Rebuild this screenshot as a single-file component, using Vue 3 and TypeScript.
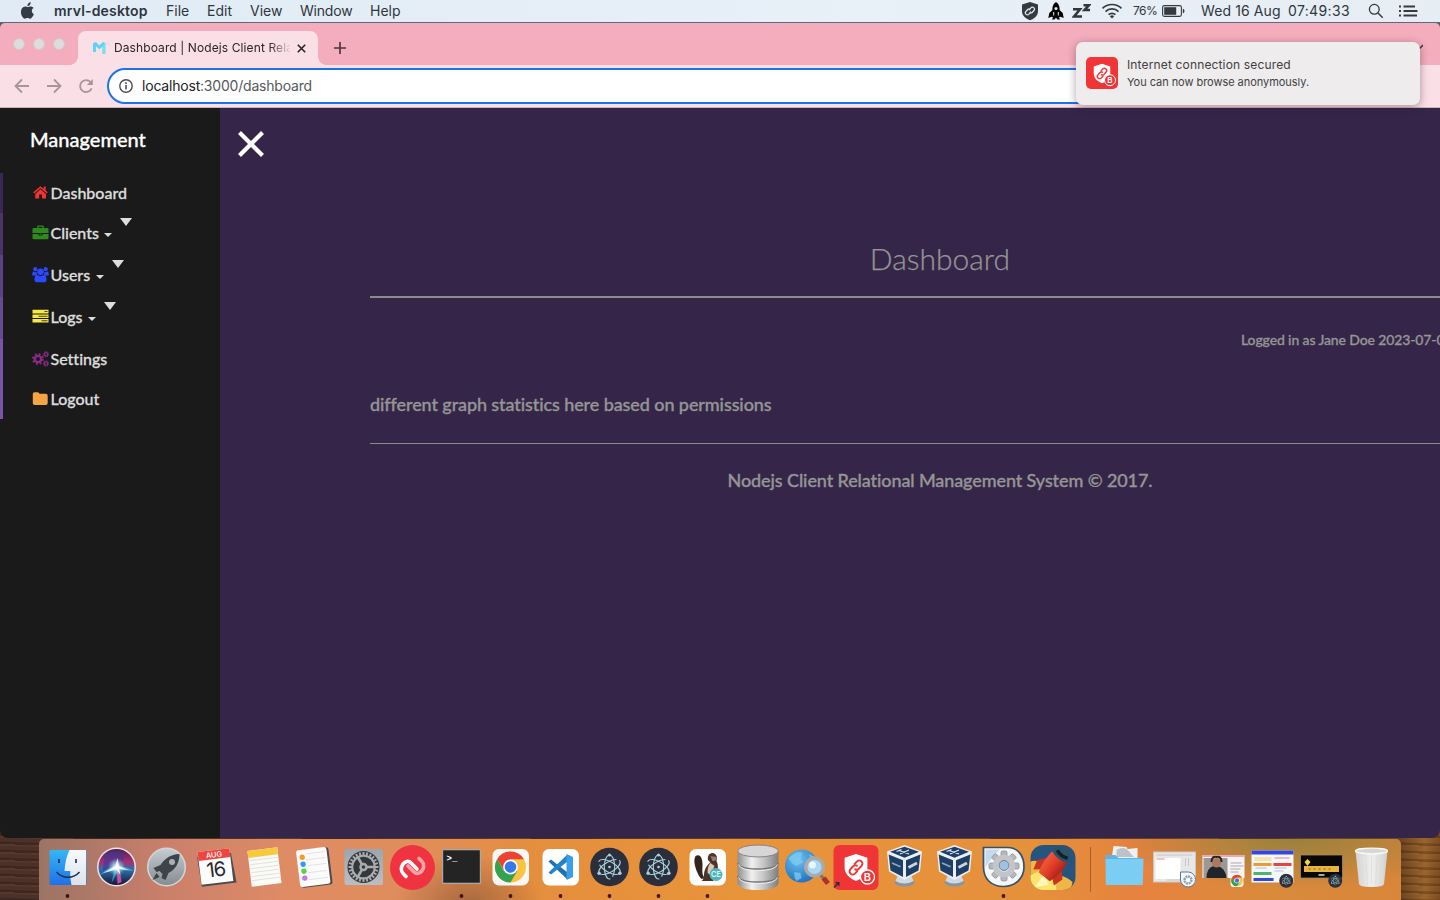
<script setup lang="ts">
interface NavItem {
  label: string
  icon: string
  color: string
  menu: boolean
}

const menus: { label: string; cls: string }[] = [
  { label: 'File', cls: 'm-file' },
  { label: 'Edit', cls: 'm-edit' },
  { label: 'View', cls: 'm-view' },
  { label: 'Window', cls: 'm-window' },
  { label: 'Help', cls: 'm-help' },
]

const nav: NavItem[] = [
  { label: 'Dashboard', icon: 'home', color: '#f03434', menu: false },
  { label: 'Clients', icon: 'briefcase', color: '#2f8a1c', menu: true },
  { label: 'Users', icon: 'users', color: '#2b49ff', menu: true },
  { label: 'Logs', icon: 'server', color: '#f8e749', menu: true },
  { label: 'Settings', icon: 'cogs', color: '#8c2a86', menu: false },
  { label: 'Logout', icon: 'folder', color: '#f5a442', menu: false },
]

const apps: string[] = [
  'finder', 'siri', 'launchpad', 'calendar', 'notes', 'reminders', 'prefs', 'authy',
  'terminal', 'chrome', 'vscode', 'electron', 'electron', 'dbeaver', 'database', 'globe',
  'secure', 'vbox', 'vbox', 'automator', 'rocket',
]
const running = new Set<number>([0, 8, 9, 10, 11, 12, 13, 19])
const stacks: string[] = ['downloads', 'win-a', 'win-b', 'win-c', 'win-d', 'trash']
const teeth: number[] = [0, 45, 90, 135, 180, 225, 270, 315]
const ticks: number[] = Array.from({ length: 24 }, (_, i) => i * 15)
</script>

<template>
  <div class="desktop">
    <svg class="defs" width="0" height="0">
      <defs>
        <linearGradient id="gBlue" x1="0" y1="0" x2="0" y2="1"><stop offset="0" stop-color="#34b8f5" /><stop offset="1" stop-color="#1f6fe8" /></linearGradient>
        <linearGradient id="gWhite" x1="0" y1="0" x2="0" y2="1"><stop offset="0" stop-color="#f7f9fc" /><stop offset="1" stop-color="#d9e3ee" /></linearGradient>
        <linearGradient id="gSilver" x1="0" y1="0" x2="0" y2="1"><stop offset="0" stop-color="#c3ccd0" /><stop offset="1" stop-color="#868c92" /></linearGradient>
        <linearGradient id="gSteel" x1="0" y1="0" x2="0" y2="1"><stop offset="0" stop-color="#9ba6b0" /><stop offset="1" stop-color="#b9bec4" /></linearGradient>
        <linearGradient id="gDisk" x1="0" y1="0" x2="1" y2="0"><stop offset="0" stop-color="#8d8d8d" /><stop offset=".35" stop-color="#f1f1f1" /><stop offset=".65" stop-color="#c3c3c3" /><stop offset="1" stop-color="#7d7d7d" /></linearGradient>
        <linearGradient id="gSiri" x1="0" y1="0" x2="0" y2="1"><stop offset="0" stop-color="#4a2457" /><stop offset=".35" stop-color="#a92c72" /><stop offset=".58" stop-color="#2f6fa8" /><stop offset="1" stop-color="#191238" /></linearGradient>
        <radialGradient id="gGlow"><stop offset="0" stop-color="#fff" /><stop offset=".35" stop-color="#c9f3fb" stop-opacity=".75" /><stop offset="1" stop-color="#5ad4ee" stop-opacity="0" /></radialGradient>
        <linearGradient id="gTrash" x1="0" y1="0" x2="1" y2="0"><stop offset="0" stop-color="#d2d2d2" /><stop offset=".5" stop-color="#f0f0ef" /><stop offset="1" stop-color="#cfcfce" /></linearGradient>
        <linearGradient id="gHull" x1="0" y1="0" x2="1" y2="0"><stop offset="0" stop-color="#ee5a38" /><stop offset=".5" stop-color="#e23c28" /><stop offset="1" stop-color="#ad2418" /></linearGradient>
        <radialGradient id="gGlobe" cx=".4" cy=".3" r=".8"><stop offset="0" stop-color="#6fc0f0" /><stop offset="1" stop-color="#1769b8" /></radialGradient>
        <clipPath id="cRocket"><rect x="-22" y="-22" width="45" height="45" rx="13" /></clipPath>
      </defs>
      <symbol id="shieldlink" viewBox="0 0 24 28">
        <path fill="#fff" d="M12 1 23 4.500V14c0 6.500-5 10.500-11 13C6 24.500 1 20.500 1 14V4.500z" />
        <g fill="none" stroke="#ef3535" stroke-width="1.900" stroke-linecap="round">
          <path d="m10.800 10.500 2.200-2.400a3 3 0 0 1 4.300 4.300l-2.600 2.800a3 3 0 0 1-3.500.5" />
          <path d="m13.200 17.500-2.200 2.400a3 3 0 0 1-4.300-4.300l2.600-2.800a3 3 0 0 1 3.500-.5" />
        </g>
      </symbol>
      <symbol id="chromeball" viewBox="-16 -16 32 32">
        <circle r="15.500" fill="#fbc344" />
        <path fill="#ea4335" d="M-13.400-7.800A15.500 15.500 0 0 1 13.400-7.800H0L-6.500 3.500z" />
        <path fill="#33a352" d="M-13.400-7.800A15.500 15.500 0 0 0 0 15.500L6.800 3.900-6.700 4z" />
        <circle r="7.400" fill="#fff" /><circle r="5.800" fill="#3478ea" />
      </symbol>
      <symbol id="atom" viewBox="-20 -20 40 40">
        <circle r="19.300" fill="#2b2e3b" />
        <g fill="none" stroke="#a9d4de" stroke-width="1.100" stroke-linecap="round">
          <ellipse rx="12" ry="5.200" transform="rotate(30)" pathLength="100" stroke-dasharray="42 7 51 0" />
          <ellipse rx="12" ry="5.200" transform="rotate(270)" pathLength="100" stroke-dasharray="42 7 51 0" />
          <ellipse rx="12" ry="5.200" transform="rotate(150)" pathLength="100" stroke-dasharray="42 7 51 0" />
        </g>
        <g fill="#a9d4de"><circle r="1.300" /><circle cy="-12" r="1.500" /><circle cx="-10.400" cy="6.200" r="1.700" /><circle cx="10.400" cy="6.200" r="1.700" /></g>
      </symbol>
    </svg>

    <header class="menubar">
      <svg class="apple" viewBox="0 0 14 17" width="14" height="17">
        <path fill="#333c46" d="M9.700.3c.1 1-.3 1.900-.9 2.600-.6.700-1.500 1.200-2.400 1.100-.1-.9.300-1.900.9-2.500C7.900.8 8.900.3 9.700.3zM12.900 12.200c-.4.900-.6 1.300-1.100 2.100-.7 1.100-1.600 2.400-2.700 2.400-1 0-1.300-.6-2.600-.6-1.400 0-1.700.6-2.600.6-1.200 0-2-1.200-2.700-2.200C-.8 11.500-.4 6.900 2.100 5.200c.7-.5 1.500-.8 2.300-.8 1.100 0 1.700.6 2.600.6.900 0 1.400-.6 2.700-.6 1 0 2.100.5 2.900 1.500-2.600 1.400-2.200 5.100.3 6.300z" />
      </svg>
      <b class="appname">mrvl-desktop</b>
      <span v-for="m in menus" :key="m.label" class="menu" :class="m.cls">{{ m.label }}</span>
      <div class="tray">
        <svg class="t-shield" width="18" height="20" viewBox="0 0 18 20">
          <path fill="#343a40" d="M9 1l8 2.500V10c0 4.600-3.400 7.400-8 9.300C4.400 17.400 1 14.600 1 10V3.500z" />
          <g fill="none" stroke="#dfe8ef" stroke-width="1.200" stroke-linecap="round"><path d="m8.200 8.800 1.700-2a2 2 0 0 1 3 2.700l-1.800 2c-.6.600-1.400.7-2 .3" /><path d="m9.600 11-1.700 2.200a2 2 0 0 1-3-2.700l1.800-2c.6-.6 1.400-.7 2-.3" /></g>
        </svg>
        <svg class="t-rocket" width="16" height="18" viewBox="0 0 16 18">
          <path fill="#000" d="M8 0c2.500 1.600 3.600 4 3.600 6.500V8l3.100 2.900 1 5.100-3.400-1.300-1.300.9 1 2H9.500L8 15.800 6.500 17.600H4l1-2-1.300-.9L.3 16l1-5.100L4.400 8V6.500C4.400 4 5.500 1.600 8 0z" />
          <circle cx="8" cy="6.500" r="1.500" fill="#e4edf4" /><path d="M5.700 10v3.500M10.300 10v3.500" stroke="#e4edf4" />
        </svg>
        <svg class="t-zz" width="19" height="16" viewBox="0 0 19 16"><path fill="none" stroke="#32373c" stroke-width="2.500" d="M1 6.300h7L2 13.600h8M11.500 2.200H17L12.500 7H18" /></svg>
        <svg class="t-wifi" width="22" height="16" viewBox="0 0 22 16">
          <g fill="none" stroke="#343a40" stroke-width="1.700"><path d="M1.500 5.400a13.500 13.500 0 0 1 19 0" /><path d="M4.500 8.600a9.300 9.300 0 0 1 13 0" /><path d="M7.600 11.700a4.800 4.800 0 0 1 6.800 0" /></g><path fill="#343a40" d="m11 15.600-2.100-2.200a3 3 0 0 1 4.200 0z" />
        </svg>
        <span class="percent">76%</span>
        <svg class="t-batt" width="23" height="12" viewBox="0 0 23 12"><rect x=".6" y=".6" width="18.800" height="10.800" rx="1.800" fill="none" stroke="#343a40" stroke-width="1.100" /><rect x="2.200" y="2.200" width="12" height="7.600" fill="#343a40" /><path fill="#343a40" d="M20.800 3.800c2.200 0 2.200 4.400 0 4.400z" /></svg>
        <span class="date">Wed 16 Aug</span>
        <span class="time">07:49:33</span>
        <svg class="t-search" width="16" height="16" viewBox="0 0 16 16"><circle cx="6.300" cy="6.300" r="4.900" fill="none" stroke="#343a40" stroke-width="1.300" /><path d="m10 10 4.700 4.700" stroke="#343a40" stroke-width="1.500" /></svg>
        <svg class="t-list" width="19" height="12" viewBox="0 0 19 12"><path fill="none" stroke="#343a40" stroke-width="1.800" d="M0 1.500h2M0 6h2M0 10.500h2M4.500 1.500H16M4.500 6h14M4.500 10.500H18" /></svg>
      </div>
    </header>

    <section class="window">
      <div class="tabstrip">
        <i class="light" /><i class="light" /><i class="light" />
        <div class="tab">
          <svg class="fav" width="13" height="12" viewBox="0 0 13 12"><path fill="#5bd3f7" d="M0 1.200 3 0l3.300 3.500L10 0l2.300.8V12H9.600V4.500L6.400 7.300 2.900 4.200V10H0z" /><path fill="#71e6e6" d="M9.600 4.500 12.300 1v11H9.600z" /></svg>
          <span class="tabtitle">Dashboard | Nodejs Client Rela</span>
          <svg class="tabx" width="9" height="9" viewBox="0 0 9 9"><path d="m.8.8 7.400 7.400M8.200.8.800 8.200" stroke="#2b2427" stroke-width="1.600" /></svg>
        </div>
        <svg class="plus" width="12" height="12" viewBox="0 0 12 12"><path d="M6 0v12M0 6h12" stroke="#4c363d" stroke-width="1.700" /></svg>
        <svg class="chev" width="8" height="6" viewBox="0 0 8 6"><path d="m0 1 4 4 4-4" fill="none" stroke="#4c363d" stroke-width="1.600" /></svg>
      </div>
      <div class="toolbar">
        <svg class="nav-ic" width="16" height="16" viewBox="0 0 16 16"><path d="M15 8H1.800M8 1.500 1.500 8 8 14.500" fill="none" stroke="#a8959b" stroke-width="1.800" /></svg>
        <svg class="nav-ic" width="16" height="16" viewBox="0 0 16 16"><path d="M1 8h13.200M8 1.500 14.500 8 8 14.500" fill="none" stroke="#a8959b" stroke-width="1.800" /></svg>
        <svg class="nav-ic" width="16" height="16" viewBox="0 0 16 16"><path d="M13.700 10.200A6 6 0 1 1 12.500 4" fill="none" stroke="#a8959b" stroke-width="1.800" /><path fill="#a8959b" d="M14.800 1v6H8.800z" /></svg>
        <div class="omnibox">
          <svg width="14" height="14" viewBox="0 0 14 14"><circle cx="7" cy="7" r="6.200" fill="none" stroke="#494c50" stroke-width="1.400" /><path d="M7 6v4.500M7 3.200v1.700" stroke="#494c50" stroke-width="1.600" /></svg>
          <span class="url"><em>localhost</em>:3000/dashboard</span>
        </div>
      </div>

      <div class="page">
        <aside class="sidebar">
          <h2>Management</h2>
          <ul>
            <li v-for="(n, i) in nav" :key="n.label" :class="['s' + i, { tall: n.menu }]">
              <svg class="ic" width="17" height="16" viewBox="0 0 17 16" :fill="n.color">
                <template v-if="n.icon === 'home'"><path d="M8.500 4.300 14 8.900V13.600H10V9.500H7.200V13.600H3.200V8.900z" /><path d="M8.500 1.200 11.800 4V1.600H13.700V5.500L15.700 7.300 14.800 8.500 8.500 3.300 2.200 8.500 1.300 7.300z" /></template>
                <template v-else-if="n.icon === 'briefcase'"><path d="M5.200 3V1.500Q5.200.5 6.200.5h4.600q1 0 1 1V3h3.400q1.300 0 1.300 1.300V8H.5V4.300Q.5 3 1.800 3zm1.300 0h4V1.700h-4zM.5 8.900h6V10.500h4V8.900h6v4q0 1.300-1.300 1.300H1.800Q.5 14.200.5 12.900zM7.500 8.700h2v1h-2z" /></template>
                <template v-else-if="n.icon === 'users'"><circle cx="8.500" cy="4.700" r="3.300" /><circle cx="3.300" cy="2.200" r="2.100" /><circle cx="13.700" cy="2.200" r="2.100" /><path d="M.3 8.500c-.2-2.500.4-4.400 1.700-4 1 .8 2 .8 2.800.5-.3 1.400 0 2.500.8 3.400H.3zM16.700 8.500c.2-2.500-.4-4.400-1.700-4-1 .8-2 .8-2.800.5.3 1.400 0 2.500-.8 3.400h5.300z" /><path d="M2.500 13.500c-.2-3 .6-5.800 3-5.500 1.800 1.400 4.200 1.400 6 0 2.400-.3 3.200 2.500 3 5.500q-.3 1.800-2 1.800h-8q-1.700 0-2-1.800z" /></template>
                <template v-else-if="n.icon === 'server'"><path d="M.5.800h16v3.700H.5zM.5 5.400h16v3.700H.5zM.5 10h16v3.600H.5z" /><path fill="#4b421e" d="M12.500 2.100h3v1h-3zM6.500 6.700h9v1h-9zM9.500 11.300h6v1h-6z" /></template>
                <template v-else-if="n.icon === 'cogs'">
                  <g fill="none" :stroke="n.color"><circle cx="6" cy="8" r="3.200" stroke-width="2.300" /><circle cx="6" cy="8" r="5" stroke-width="1.800" stroke-dasharray="2 1.930" /><circle cx="14" cy="3.300" r="1.700" stroke-width="1.300" /><circle cx="14" cy="3.300" r="2.700" stroke-width="1" stroke-dasharray="1.200 .9" /><circle cx="14" cy="12.500" r="1.700" stroke-width="1.300" /><circle cx="14" cy="12.500" r="2.700" stroke-width="1" stroke-dasharray="1.200 .9" /></g>
                </template>
                <path v-else d="M.8 3Q.8 1.200 2.500 1.200h3.200q1.500 0 1.700 1.600h6.300q2 0 2 1.900v7.400q0 1.900-1.900 1.900H2.700Q.8 14 .8 12.100z" />
              </svg>
              <span>{{ n.label }}</span>
              <i v-if="n.menu" class="caret" />
              <i v-if="n.menu" class="marker" />
            </li>
          </ul>
        </aside>
        <main class="content">
          <svg class="close" width="28" height="28" viewBox="0 0 28 28"><path d="m2.500 2.500 23 23M25.500 2.500l-23 23" stroke="#fff" stroke-width="4.200" /></svg>
          <div class="body">
            <h1>Dashboard</h1>
            <p class="who">Logged in as Jane Doe 2023-07-0</p>
            <p class="stats">different graph statistics here based on permissions</p>
            <footer>Nodejs Client Relational Management System © 2017.</footer>
          </div>
        </main>
      </div>
    </section>

    <aside class="toast">
      <div class="toast-ic">
        <svg width="32" height="32" viewBox="0 0 32 32"><use href="#shieldlink" x="7" y="6" width="18" height="21" /><circle cx="24" cy="23.200" r="5.500" fill="#ef3535" stroke="#fff" /><text x="24" y="26" text-anchor="middle" class="badge-b">B</text></svg>
      </div>
      <div>
        <div class="toast-title">Internet connection secured</div>
        <div class="toast-text">You can now browse anonymously.</div>
      </div>
    </aside>

    <div class="dockrow">
      <nav class="dock">
        <div v-for="(a, i) in apps" :key="i" class="cell">
          <svg width="49" height="61" viewBox="-24.500 -28 49 61">
            <template v-if="a === 'finder'"><rect x="-18" y="-17" width="37" height="35" rx="1.500" fill="url(#gBlue)" /><path fill="url(#gWhite)" d="M2-17H18.500V18H4C3 13 2.500 9 2.800 4H-3C-2.500-4-1-11 2-17z" /><path d="M-8.500-8v4M8.500-8v4" stroke="#173049" stroke-width="1.600" /><path d="M-11 5C-5 12 6 12 12 5" fill="none" stroke="#173049" stroke-width="1.400" /></template>
            <template v-else-if="a === 'siri'"><circle r="19.500" fill="#e8e4ea" /><circle r="18" fill="url(#gSiri)" /><path fill="#3b3b9b" opacity=".6" d="M-12-12Q0-20 8-10L4 0-14 5z" /><path fill="#48c8df" opacity=".6" d="M-17 8Q-6-2 0-1 10-1 17 4L2 3-5 16-2 2z" /><path fill="#e85aa5" d="M0-1 3 0 5 15 1 17z" opacity=".8" /><circle r="9" fill="url(#gGlow)" /><path fill="#fff" d="M-13 6-1-1.500 1-9 2.500-1 12 3 2.500 2 4 8 0 2.500z" opacity=".85" /></template>
            <template v-else-if="a === 'launchpad'"><circle r="19.500" fill="#d3d6d8" /><circle r="18" fill="url(#gSilver)" /><path fill="#3d4348" d="M13-13C4-13-2-8-6-2L-13 1-10 5-7 4-4 7-5 11-1 13 2 6C8 3 13-3 13-13zM-10 6-14 13-7 10z" /><circle cx="5.500" cy="-5" r="3" fill="#a9b0b5" /></template>
            <template v-else-if="a === 'calendar'"><g transform="rotate(-7)"><path fill="#4b4c52" d="M-17-12h34l2 30h-35z" /><rect x="-16" y="-17" width="32" height="33" fill="#fbfbfb" /><path fill="#ee4540" d="M-16-17h32v9h-32z" /><text y="-9.800" class="cal-m">AUG</text><text y="9.500" class="cal-d">16</text></g></template>
            <template v-else-if="a === 'notes'"><g transform="rotate(-7)"><rect x="-15" y="-18" width="30" height="36" fill="#fafaf7" /><path fill="#f7ca3e" d="M-15-18h30v7h-30z" /><path stroke="#dcdcd8" stroke-width=".8" d="M-14-8h28M-14-4h28M-14 0h28M-14 4h28M-14 8h28M-14 12h28" /></g></template>
            <template v-else-if="a === 'reminders'"><g transform="rotate(-7)"><rect x="-14" y="-18" width="31" height="37.500" rx="2.500" fill="#4f4a4a" /><rect x="-15.500" y="-18.500" width="30.500" height="37" rx="2.500" fill="#fbfbfb" /><path stroke="#dedede" stroke-width=".8" d="M-6-14h19M-6-8h19M-6-2h19M-6 5h19M-6 12h19" /><circle cx="-10" cy="-11" r="2.700" fill="#f59a2f" /><circle cx="-10" cy="-4" r="2.700" fill="#2f9bf5" /><circle cx="-10" cy="3" r="2.700" fill="#57d33d" /><circle cx="-10" cy="10" r="2.700" fill="#c678dd" /></g></template>
            <template v-else-if="a === 'prefs'"><rect x="-19" y="-18" width="38.500" height="36" rx="2" fill="url(#gSteel)" /><circle r="16" fill="#34383c" /><rect v-for="t in ticks" :key="t" x="-1" y="-15" width="2" height="4" fill="#a9abad" :transform="`rotate(${t})`" /><circle r="11.300" fill="none" stroke="#a9abad" stroke-width="2" /><circle r="3" fill="none" stroke="#a9abad" stroke-width="2.500" /><path d="M3 0H11M-1.500-2.600-5.500-9.500M-1.500 2.600-5.500 9.500" stroke="#a9abad" stroke-width="2.600" /></template>
            <template v-else-if="a === 'authy'"><circle cy="0.500" r="22.500" fill="#ef3340" /><g fill="none" stroke-width="3.700" stroke-linecap="round"><path stroke="#f6a3a8" d="M6.500-8.500 9-6C15 0 7 10 1.500 5L-4.500-1" /><path stroke="#fff" d="M-6.500 9.500-9 7C-15 1-7-9.500-1.500-4L4.500 2" /></g></template>
            <template v-else-if="a === 'terminal'"><rect x="-19.500" y="-18" width="39" height="35" rx="1.500" fill="#a7a9a8" /><rect x="-18.300" y="-16.700" width="36.600" height="32.400" fill="#242424" /><text x="-15" y="-6" class="prompt">&gt;_</text></template>
            <template v-else-if="a === 'chrome'"><rect x="-18" y="-18" width="36.500" height="36.500" rx="6.500" fill="#f8f7f5" /><use href="#chromeball" x="-16" y="-16" width="32" height="32" /></template>
            <template v-else-if="a === 'vscode'"><rect x="-18" y="-18" width="36.500" height="36.500" rx="6.500" fill="#fff" /><path fill="#1f6fb3" d="M-12-5.500-9.500-7.500 7 5.500V12.500z" /><path fill="#2482c6" d="M-12 5.500-9.500 7.500 7-5.500V-12.500z" /><path fill="#3a9fe6" d="M6-13 12.500-10V10L6 13z" /></template>
            <use v-else-if="a === 'electron'" href="#atom" x="-20" y="-20" width="40" height="40" />
            <template v-else-if="a === 'dbeaver'"><rect x="-18" y="-18" width="36.500" height="36.500" rx="6.500" fill="#fff" /><path fill="#33241d" d="M-12-11C-7-14-5-8-5-3-5 3-6 7-3 11L-6 12C-10 8-14-3-13-8z" /><path fill="#4b3429" d="M2-13C7-16 11-11 9-6 12 0 10 7 5 11L6 14H-6C-3 12-4 8-3 4-2 0 1-3 3-5-1-6 0-11 2-13z" /><path fill="#9b7963" d="M3-11 9-10C10-7 8-6 5-6z" /><path fill="#d9c8b6" d="M3-4 7-1 3 8 0 6Q0-1 3-4z" /><circle cx="8.500" cy="7.500" r="6.500" fill="#52b4b8" /><text x="8.500" y="10.300" class="ce">CE</text></template>
            <template v-else-if="a === 'database'"><path fill="url(#gDisk)" d="M-20-16V16Q-19 23 0 23 20 23 21 16V-16z" /><ellipse cx=".5" cy="-16" rx="20.300" ry="6" fill="#d6d6d6" stroke="#858585" /><path fill="none" stroke="#777" stroke-width="1.500" d="M-20-4Q-18 2 0 2 19 2 21-4M-20 9Q-18 15 0 15 19 15 21 9" /><path fill="none" stroke="#efefef" d="M-19-2.500Q-17 3.500 0 3.500 18 3.500 20-2.500M-19 10.500Q-17 16.500 0 16.500 18 16.500 20 10.500" /></template>
            <template v-else-if="a === 'globe'"><circle cx="-5" cy="-1" r="16.500" fill="url(#gGlobe)" /><path fill="#7fcbf2" opacity=".75" d="M-18-9q8-8 14-5l-2 6 3 3-7 4q-5-2-8-8zM-12 5l6 1 1 5-5 3q-3-4-2-9zM2-13l7 3-4 4z" /><path d="m14 8 5 6" stroke="#777" stroke-width="3" /><circle cx="8" cy="0" r="8.800" fill="#a9d8f4" stroke="#aaa" stroke-width="3.500" /><circle cx="6" cy="-2" r="3.500" fill="#e8f6fd" /><path d="m17 11 4.500 5.500" stroke="#b03028" stroke-width="5" /></template>
            <template v-else-if="a === 'secure'"><rect x="-22" y="-22" width="45" height="45" rx="6" fill="#ef3535" /><use href="#shieldlink" x="-12" y="-14" width="25" height="29" /><circle cx="12" cy="10" r="7" fill="#ef3535" stroke="#fff" stroke-width="1.300" /><text x="12" y="14" class="b-big">B</text><path d="m-21.500 20.500 4-4" stroke="#26303a" stroke-width="1.500" /><path fill="#26303a" d="M-16 15h-4.500l4.500 4.500z" /></template>
            <template v-else-if="a === 'vbox'"><ellipse cx="0" cy="15.500" rx="10" ry="4" fill="#8496a5" /><path fill="#cfd9e1" d="M-7 9H7L9 14q-9 5-18 0z" /><path fill="#e9eff3" d="M0-22 17.500-15.500 15.500 4.500 0 13-15.500 4.500-17.500-15.500z" /><path fill="#1e3e66" d="M0-20.300 14.500-15.200 0-9.300-14.500-15.200zM-15.800-12.500-1.500-6.800V10L-14 3.500zM15.800-12.500 1.500-6.800V10L14 3.500z" /><path fill="none" stroke="#dde7ef" stroke-width="1.300" d="M-5.500-16.500 4.500-13M4.500-17-4.500-13M-8-15.500-3-17.500" /><path fill="none" stroke="#8fa6bf" stroke-width="1.800" d="m-12.500-4 8.500 3.800" /><path stroke="#c7d4e1" stroke-width="3" d="m4 .5 8.500-4.500" /></template>
            <template v-else-if="a === 'automator'"><path fill="#f4f8fb" stroke="#34516e" stroke-width="1.700" d="M-20-19.500H4C15-19.500 20.500-11 20.500 0S12 19.500 0 19.500-20 12-20 0z" /><path fill="#c4dbef" d="M-18-17.500H-4L-14-6-18 0z" /><g fill="#b5b8bc" stroke="#858a90" stroke-width=".7"><rect v-for="t in teeth" :key="t" x="-3" y="-15" width="6" height="7" rx="1.500" :transform="`translate(0.500 -1) rotate(${t})`" /></g><circle cx=".5" cy="-1" r="8.500" fill="none" stroke="#c3c6c9" stroke-width="5.500" /><circle cx=".5" cy="-1.500" r="5" fill="#9fc1e6" stroke="#75797d" /></template>
            <template v-else><g clip-path="url(#cRocket)"><path fill="#27547f" d="M-23-23h48v48h-48z" /><path fill="#f0b648" d="M-23-5Q-14-9-8 0L6 8Q15 10 20 15L18 24H-23z" /><path fill="#fbe56c" d="M-23 9-12 3-2 10 3 14 4 24H-23z" /><path fill="#fff7bd" d="M-18 20-8 7-4 18z" /><g transform="translate(1 -2) rotate(38)"><path fill="#c93420" d="M-8-3-16 6-13 16-7 11zM8-3 16 6 13 16 7 11z" /><path fill="url(#gHull)" d="M-9.500-11H9.500Q11 5 7 15H-7Q-11 5-9.500-11z" /><path fill="#2b5468" d="M-9.500-10Q-9-21 0-21T9.500-10Q0-6-9.500-10z" /><path fill="none" stroke="#14202a" stroke-width="3.500" d="M-6-14Q0-11 7-14" /></g></g></template>
            <circle v-if="running.has(i)" cy="29" r="1.900" fill="#43140f" />
          </svg>
        </div>
        <div class="divider" />
        <div v-for="s in stacks" :key="s" class="cell">
          <svg width="49" height="61" viewBox="-24.500 -28 49 61">
            <template v-if="s === 'downloads'"><path fill="#eef1f3" d="M-11-21 2-20 3-18 13-19V-8H-13z" /><path fill="#b9c3c9" d="M-8-17Q0-22 5-15T12-10H-8z" /><path fill="#5cb5e6" d="M-19-12h10l3 3h24.500v7H-19z" /><path fill="#7bcdf4" d="M-19-8h38l-.7 25q0 1-1 1h-35q-1 0-1-1z" /></template>
            <template v-else-if="s === 'win-a'"><rect x="-21" y="-15" width="42" height="30" fill="#e7e7e7" stroke="#c9c9c9" /><path fill="#fff" d="M-19-9h25v21h-25z" /><path stroke="#c6c6c6" d="M-18-12h36M11-9v8M14-9v8M-8 13h17" /><path d="M-18-8h8" stroke="#d98d8d" /><path fill="#f4f8fb" stroke="#57789a" d="M6 5h8a7.500 7.500 0 1 1-8 8z" /><circle cx="13.500" cy="13" r="3.500" fill="none" stroke="#929da8" stroke-width="2.400" stroke-dasharray="2 .7" /></template>
            <template v-else-if="s === 'win-b'"><rect x="-21" y="-12" width="42" height="23" fill="#f6f4f5" /><path fill="#efa5b5" d="M-21-12h42v2h-42z" /><path fill="#9c9893" d="M-20-9H4v20h-24z" /><path fill="#21242a" d="M-17 11q0-10 7-12h4Q2 1 3 11z" /><circle cx="-7" cy="-4" r="4.500" fill="#ae785f" /><path d="M-12-5q0-6 5-5 5-1 5 5" stroke="#292322" stroke-width="2" fill="none" /><path stroke="#aaa" d="M7-4h11M7-1h13M7 2h10M7 5h8" /><rect x="7" y="7" width="13" height="13" rx="3" fill="#f5f2ef" /><use href="#chromeball" x="7.500" y="7.500" width="12" height="12" /></template>
            <template v-else-if="s === 'win-c'"><rect x="-21" y="-16.500" width="42" height="32" fill="#f5f6f8" /><path fill="#3447dc" d="M-21-16.500h42v4h-42zM-19 11h20v3h-20z" /><path fill="#f2e5b1" d="M-18-10H-1v4h-17z" /><path fill="#e7c0c4" d="M2-10h15v2H2z" /><path fill="#eb9c38" d="M-19-4H-1v3h-18z" /><path fill="#e64343" d="M1-4h18v3H1z" /><path fill="#4cb272" d="M-19 5H-1v3h-18z" /><path stroke="#a9c5db" d="M-17 1h11M2 1h12M2 4h9" /><use href="#atom" x="6.500" y="6.500" width="14.500" height="14.500" /></template>
            <template v-else-if="s === 'win-d'"><rect x="-21" y="-12" width="42" height="23" fill="#090807" stroke="#a18b68" stroke-width=".8" /><path fill="#e6b640" d="M-17.500-1h35v6h-35z" /><path fill="none" stroke="#86601b" d="M-13 2H12" stroke-dasharray="2 3" /><path fill="#f6d34a" d="m-14-8 3 3-3 4-3-4z" /><path stroke="#ddd" stroke-width="1.500" d="M-3 8h6" /><use href="#atom" x="6.500" y="6.500" width="14.500" height="14.500" /></template>
            <template v-else><path fill="url(#gTrash)" d="M-16-16h32L12.500 17q-.3 3-12.500 3t-12.500-3z" /><path stroke="#dcdcdc" stroke-width=".8" fill="none" d="M-11-13-8 17M-6-13-4 18M0-13V18M6-13 4 18M11-13 8 17" /><ellipse cy="-16" rx="16" ry="2.800" fill="#d7d7d5" stroke="#f9f9f8" stroke-width="1.300" /></template>
          </svg>
        </div>
      </nav>
    </div>
  </div>
</template>

<style>
body { margin: 0; overflow: hidden; }
</style>

<style scoped>
* { box-sizing: border-box; }
.desktop {
  position: relative;
  width: 1440px;
  height: 900px;
  overflow: hidden;
  display: flex;
  flex-direction: column;
  background: #4d6274;
  font-family: Inter, "Liberation Sans", sans-serif;
}
.defs { position: absolute; }
svg { display: block; flex: none; }
.menubar {
  height: 23px;
  flex: none;
  display: flex;
  align-items: center;
  padding-left: 21px;
  background: linear-gradient(90deg, #e0ebf5, #e8f0f8 60%, #e6edf3);
  border-bottom: 1px solid #5c6b7a;
  color: #2f363d;
  font-size: 14px;
  white-space: nowrap;
}
.apple { margin-right: 19px; margin-top: -2px; }
.appname, .menu, .percent, .date, .time { padding-bottom: 2px; }
.appname { width: 112px; font-weight: 600; letter-spacing: 0.17px; }
.m-file { width: 41px; }
.m-edit { width: 43px; }
.m-view { width: 50px; }
.m-window { width: 70px; letter-spacing: -0.2px; }
.m-help { width: 40px; }
.tray { margin-left: auto; display: flex; align-items: center; width: 419px; }
.t-rocket { margin-left: 9px; }
.t-zz { margin-left: 8px; }
.t-wifi { margin-left: 10px; }
.percent { width: 29px; margin-left: 10px; font-size: 12px; letter-spacing: -0.5px; }
.date { margin-left: 16px; width: 87px; letter-spacing: 0.1px; }
.time { width: 80px; letter-spacing: 0.35px; }
.t-list { margin-left: 15px; }

.window {
  height: 815px;
  flex: none;
  display: flex;
  flex-direction: column;
  border-radius: 5px 5px 8px 8px;
  overflow: hidden;
  z-index: 1;
}
.tabstrip {
  height: 42px;
  flex: none;
  display: flex;
  align-items: flex-start;
  background: #f4adbc;
  padding: 8px 0 0 13px;
}
.light { width: 12px; height: 12px; border-radius: 50%; background: #dedcdc; border: 1px solid #d3c9cc; margin: 7px 8px 0 0; }
.tab {
  position: relative;
  width: 240px;
  height: 34px;
  margin-left: 5px;
  background: #fbdfe6;
  border-radius: 8px 8px 0 0;
  display: flex;
  align-items: center;
  padding-left: 15px;
}
.tab::before, .tab::after {
  content: "";
  position: absolute;
  bottom: 0;
  width: 8px;
  height: 8px;
}
.tab::before { left: -8px; background: radial-gradient(circle at 0 0, #f4adbc 7.5px, #fbdfe6 8px); }
.tab::after { right: -8px; background: radial-gradient(circle at 100% 0, #f4adbc 7.5px, #fbdfe6 8px); }
.tabtitle {
  width: 176px;
  margin-left: 8px;
  padding-bottom: 2px;
  font-size: 12px;
  letter-spacing: 0.1px;
  color: #2a2327;
  white-space: nowrap;
  overflow: hidden;
  -webkit-mask-image: linear-gradient(90deg, #000 155px, transparent 178px);
  mask-image: linear-gradient(90deg, #000 155px, transparent 178px);
}
.tabx { margin-left: 7px; }
.plus { margin: 11px 0 0 16px; }
.chev { margin: 13px 17px 0 auto; }
.toolbar {
  height: 43px;
  flex: none;
  display: flex;
  align-items: center;
  padding-left: 14px;
  background: #fbdfe6;
  border-bottom: 1px solid #cdb3bd;
}
.nav-ic { margin-right: 16px; }
.omnibox {
  width: 1280px;
  height: 36px;
  flex: none;
  margin-left: -3px;
  border: 2px solid #1a73e8;
  border-radius: 18px;
  background: #fff;
  display: flex;
  align-items: center;
  padding-left: 10px;
}
.url { margin-left: 9px; padding-bottom: 1px; font-size: 14px; letter-spacing: -0.2px; color: #55585c; white-space: nowrap; }
.url em { font-style: normal; color: #202124; }

.page { height: 730px; display: flex; font-family: Lato, "Liberation Sans", sans-serif; font-variant-ligatures: none; }
.sidebar { width: 220px; flex: none; background: #1a1a1a; }
.sidebar h2 { margin: 0; height: 65px; padding: 0 0 0 30px; line-height: 63px; font-size: 20px; font-weight: 500; color: #fff; -webkit-text-stroke: 0.3px #fff; }
.sidebar ul { margin: 0; padding: 0; list-style: none; }
.sidebar li { display: flex; align-items: center; height: 40px; padding: 0 0 2px 29px; border-left: 3px solid #7c52ab; color: #ddd; font-size: 16px; font-weight: 500; -webkit-text-stroke: 0.3px #ddd; }
.sidebar li.tall { height: 42px; padding-bottom: 4px; }
.sidebar .s0 { border-color: #392857; }
.sidebar .s1 { border-color: #4c3368; }
.sidebar .s2 { border-color: #5c4183; }
.sidebar .s3 { border-color: #684993; }
.ic { margin: 2px 1.5px 0 0; }
.caret { margin: 6px 0 0 5.5px; border: 4px solid transparent; border-top-color: #ddd; border-bottom: 0; }
.marker { align-self: flex-start; margin: 5px 0 0 8px; border: 6px solid transparent; border-top: 8px solid #ddd; border-bottom: 0; }
.content { flex: 1; min-width: 0; background: #352649; display: flex; flex-direction: column; overflow: hidden; }
.close { margin: 22px 0 0 17px; }
.body { width: 1140px; flex: none; margin-left: 150px; color: #959595; }
h1 { margin: 76px 0 0; height: 64px; padding-top: 3px; border-bottom: 2px solid #8b8b8b; text-align: center; font-size: 30px; font-weight: 300; line-height: 42px; -webkit-text-stroke: 0.25px #959595; }
.who { margin: 32px 0 0; padding-left: 871px; font-size: 14px; font-weight: 500; line-height: 20px; letter-spacing: -0.12px; white-space: nowrap; -webkit-text-stroke: 0.3px #959595; }
.stats { margin: 41px 0 0; font-size: 18px; font-weight: 500; line-height: 26px; letter-spacing: -0.09px; padding-bottom: 26px; border-bottom: 1px solid #8b8b8b; -webkit-text-stroke: 0.35px #959595; }
footer { margin-top: 23px; text-align: center; font-size: 18px; font-weight: 500; line-height: 26px; letter-spacing: -0.1px; -webkit-text-stroke: 0.35px #959595; }

.toast {
  position: absolute;
  z-index: 3;
  left: 1076px;
  top: 42px;
  width: 344px;
  height: 63px;
  border-radius: 7px;
  background: #eeecec;
  box-shadow: 0 2px 9px rgba(40, 20, 40, 0.4);
  display: flex;
  align-items: center;
  padding-left: 10px;
  color: #414143;
  white-space: nowrap;
}
.toast-ic { width: 32px; height: 32px; border-radius: 5px; background: #ef3535; margin: -1px 9px 0 0; }
.toast-title { font-size: 12px; line-height: 18px; letter-spacing: 0.15px; }
.toast-text { font-size: 11px; line-height: 17px; letter-spacing: -0.04px; }
.badge-b { font: 600 8px Inter, sans-serif; fill: #fff; }
.b-big { font: 600 11px Inter, sans-serif; fill: #fff; text-anchor: middle; }

.dockrow {
  height: 76px;
  margin-top: -14px;
  padding: 15px 39px 0;
  flex: none;
  background:
    repeating-linear-gradient(2deg, rgba(0, 0, 0, 0.2) 0 2px, transparent 3px 6px, rgba(160, 100, 60, 0.14) 7px 8px),
    linear-gradient(90deg, #4c3128 0 39px, #5c3b24 50%, #6b4322 1400px, #9b642b 1425px, #7b4b20);
}
.dock {
  height: 61px;
  display: flex;
  padding-left: 4.1px;
  border-radius: 5px 5px 0 0;
  background:
    radial-gradient(ellipse 75px 50px at 430px 65px, rgba(135, 85, 55, 0.65), transparent),
    radial-gradient(ellipse 180px 50px at 1255px 0, rgba(125, 125, 62, 0.7), transparent),
    linear-gradient(90deg, #9b7465, #cb806b 130px, #df8c65 250px, #e08d5b 380px, #e58e3e 490px, #e8943b 700px, #e5903b 1000px, #e6823f 1100px, #d98a3b 1230px, #d9863a);
}
.cell { width: 49.25px; flex: none; display: flex; justify-content: center; }
.divider { width: 1px; height: 45px; margin: 8px 9.6px 0 12.3px; background: #a9602d; flex: none; }
.cal-m { font: 500 7.5px Inter, sans-serif; fill: #fff; text-anchor: middle; }
.cal-d { font: 400 20px Inter, sans-serif; fill: #28282a; text-anchor: middle; letter-spacing: -1px; }
.prompt { font: 700 9px "Liberation Mono", monospace; fill: #fff; }
.ce { font: 500 7.5px Inter, sans-serif; fill: #e1ffff; text-anchor: middle; }
</style>
